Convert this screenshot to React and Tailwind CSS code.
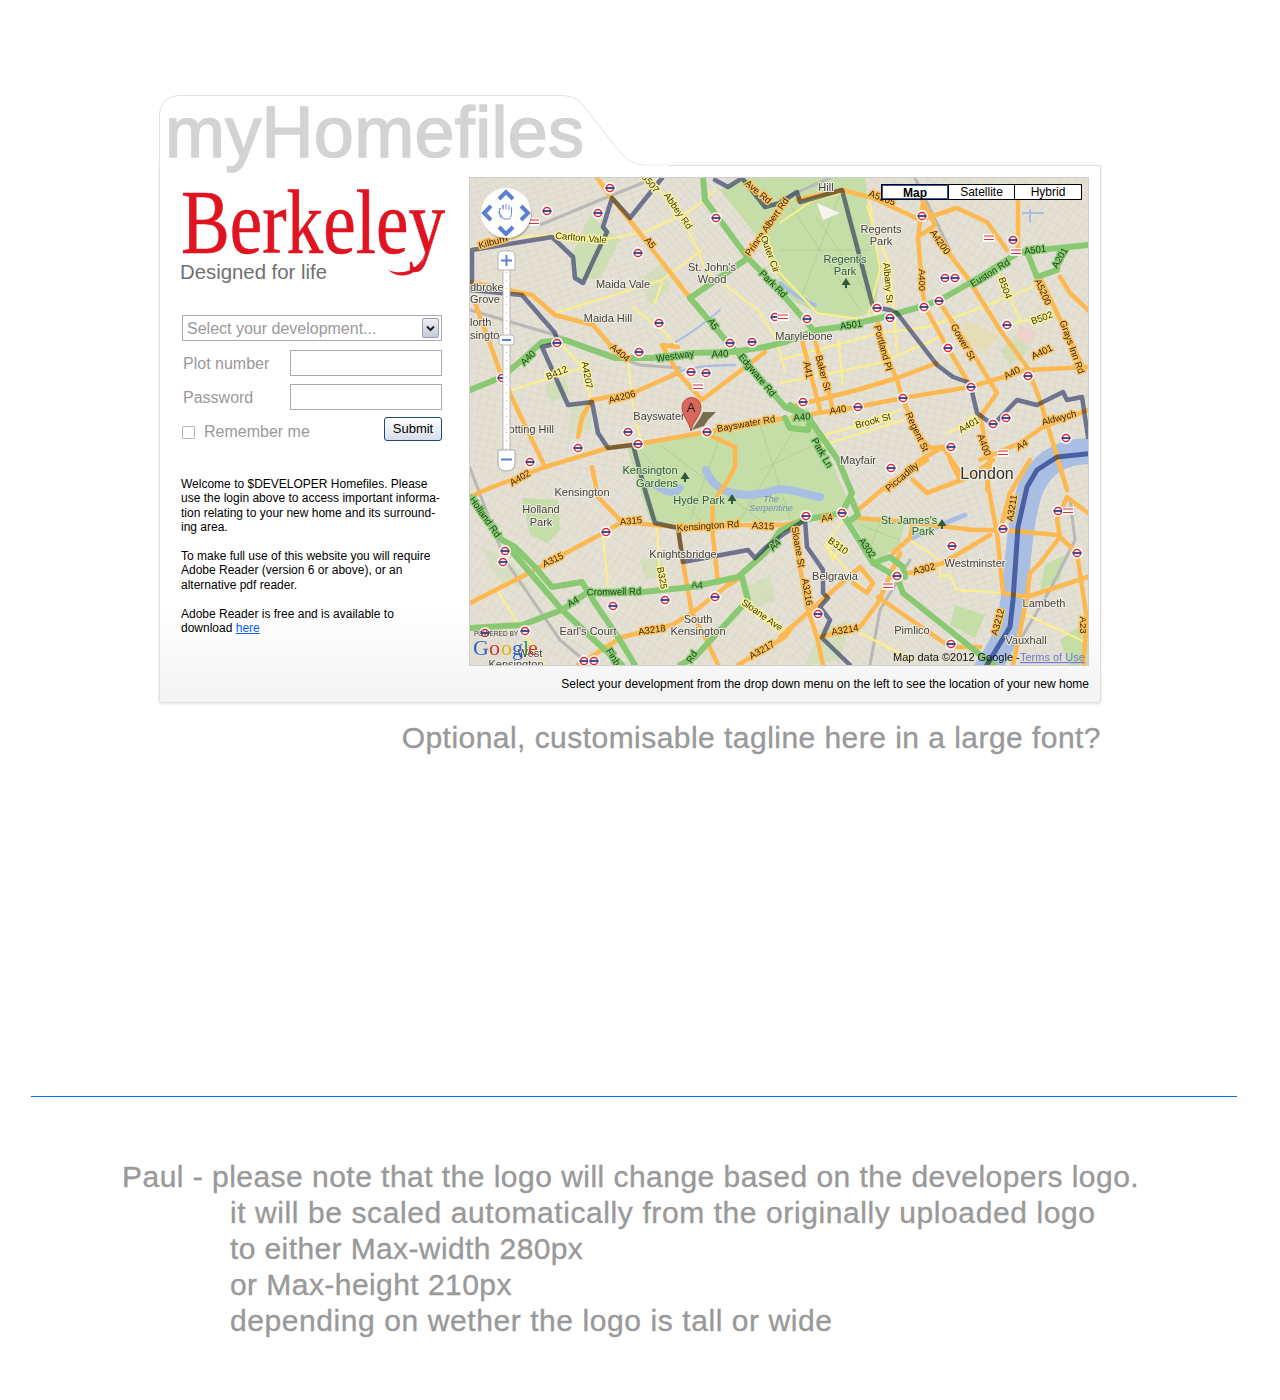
import React from 'react';

const orangeRoads = [
  '597,178 612,198 635,227 655,253 690,298',
  '470,282 508,290 532,295 555,315 593,325 612,347 628,358',
  '592,400 635,392 678,373 702,400 765,352',
  '678,373 662,345 678,347',
  '578,437 582,417 592,400',
  '470,497 485,490 545,467 608,448 638,444 707,432 785,418',
  '790,407 857,390 897,378 937,363',
  '793,417 857,407 903,398 970,387 1027,370 1088,367',
  '475,303 502,377 545,467',
  '705,433 735,447 735,467 728,480 713,503 712,527 718,583',
  '470,603 525,575 605,532 622,522 655,525 678,527 738,525 785,525 803,520',
  '678,527 683,563 692,613',
  '578,665 622,637 672,625 692,613 728,585 742,577',
  '692,613 705,637 718,665',
  '738,665 785,637 790,630',
  '592,467 598,497 622,522',
  '858,510 890,483 927,460',
  '858,518 907,522 973,530 1003,530 1057,535',
  '893,553 910,538 913,523',
  '987,480 997,533 1003,593',
  '893,577 913,572 943,563 990,535',
  '820,637 860,627 878,603 900,553',
  '878,597 943,642 952,647 980,647',
  '793,527 807,607 817,637 823,665',
  '780,637 860,567 873,583 867,593 853,583',
  '1003,593 1027,597 1088,577',
  '1013,665 1027,597 1030,573 1040,563 1060,537 1057,520 1067,497 1088,513',
  '1060,537 1077,553 1087,620 1083,665',
  '1000,530 1010,493 1030,460',
  '918,237 922,287 925,307 947,347 967,380',
  '933,233 967,277 1000,330 1027,367 1040,400 1067,490',
  '940,303 977,360 997,393 980,417',
  '1040,277 1057,313 1083,367',
  '1060,277 1070,293 1088,310',
  '980,460 1020,443 1043,427 1088,410',
  '980,417 990,463 987,490',
  '887,490 920,460 943,447 960,473',
  '913,480 927,493 970,477 993,460',
  '950,460 960,480 927,493',
  '878,323 887,357 897,380 903,400 920,437 930,448 943,447',
  '815,340 830,397 833,410',
  '802,340 820,410',
  '797,200 842,190 873,198 920,220 957,208 987,222 1007,250',
  '1018,200 1018,250',
  '925,190 918,237 935,225 920,195',
];

const greenRoads = [
  '470,390 502,377 522,360 542,342 565,340 592,350 615,358 652,358 692,353 732,352 765,347 785,342 817,330 840,327 880,318 920,307 940,300 970,283 1010,258 1020,252 1088,245',
  '690,298 728,343 738,353 785,407 808,417 838,460 852,493 842,513 873,563 897,577 903,593 983,657 995,665',
  '873,563 890,557 903,567 905,577',
  '470,628 522,625 562,610 588,592 642,592 692,587 738,577 765,553 780,531 803,520 842,513',
  '470,497 502,540 515,547 535,567 552,587 582,582 595,603 618,637 635,665',
  '508,547 562,610 605,650 622,665',
  '742,577 748,600 695,657 680,665',
  '703,177 705,200 748,258 785,297 790,303 813,330',
  '690,298 748,258',
  '1027,252 1037,277 1057,270 1060,250',
  '790,405 810,417 808,430 790,428 785,418',
  '842,513 848,522 858,515 852,500',
];

const yellowRoads = [
  '472,250 515,237 552,235 602,240 645,232 692,210 716,190',
  '645,177 678,210 698,250 705,270 758,310 775,337 785,370',
  '555,313 662,280 702,250',
  '632,307 662,330 678,347',
  '655,303 662,283',
  '628,360 635,420 642,443',
  '512,390 585,367',
  '555,337 582,367 592,403',
  '867,207 890,267 897,350',
  '780,273 817,313 867,320 880,270 870,203',
  '780,223 813,200 842,193',
  '997,270 1020,320',
  '1007,325 1057,313',
  '780,360 880,333 927,327 967,313 1033,287',
  '780,383 880,363 940,337',
  '947,433 960,427 977,413',
  '817,437 853,427 900,410',
  '817,447 903,420',
  '657,528 660,587',
  '603,537 608,587',
  '910,540 940,560 940,577 950,575 957,590 1007,593',
  '860,633 913,660',
  '1023,613 1087,643',
  '497,590 522,630 545,663',
  '827,547 843,543 833,560 827,547',
  '742,603 785,630',
  '843,520 825,545 860,585',
  '838,340 843,385',
  '870,300 890,355',
];

const tubeLines = [
  '662,178 630,218 612,198 603,227 607,232 595,257 583,283 575,278 573,257 552,237 472,250 472,280 470,290 522,295 555,333 558,343 542,347 568,405 592,402 598,433 608,448 633,445 645,490 655,523 678,528 683,562 748,550 755,558 765,548 785,533 805,520 807,547 823,570 823,593 828,598 820,607 830,620 822,638 850,665',
  '715,180 728,187 742,178 765,207 780,203 797,192 800,202 842,190 873,307 890,310 897,313 937,365 953,377 970,383 977,413 993,425 1017,400 1037,405 1063,392 1067,400 1082,397 1088,437',
];

const railLines = [
  '470,310 555,335 640,365 680,368',
  '540,225 600,200 650,180',
  '780,200 830,178',
  '470,468 505,560 560,640 590,665',
  '915,178 950,250',
  '870,665 880,610 910,560',
  '1020,640 1050,590 1075,540 1070,500',
];

const parkPaths = [
  'M640 450L700 520M660 445L760 520M720 437L690 520M760 425L790 518M800 420L740 520M825 440L760 470',
  'M790 205L860 310M840 195L800 300M780 250L870 250M815 215L865 290',
  'M860 525L900 540M880 522L870 550',
];

const tubeStops = [
  [610,188],[547,211],[598,213],[638,253],[716,218],[775,317],[659,323],[730,343],[752,342],[557,343],[639,352],[691,372],[706,373],[502,378],[628,432],[707,432],[578,448],[638,444],[530,462],
  [922,216],[1013,240],[945,278],[955,278],[877,308],[890,318],[924,307],[939,301],[807,319],[1007,325],[948,348],[1028,376],[971,387],[803,402],[858,407],[903,398],[1006,418],[993,424],[1066,438],[951,447],[891,468],
  [606,532],[505,551],[503,562],[613,606],[665,600],[715,597],[485,633],[525,631],[584,661],[594,661],
  [806,516],[842,513],[1003,529],[952,546],[897,576],[818,614],[951,644],[1058,511],[1077,553],
];

const railStops = [[534,222],[698,387],[783,317],[989,238],[1016,252],[1003,453],[1068,511],[888,586]];

const placeLabels = [
  ['Hill',826,191],['Regents',881,233],['Park',881,245],["St. John's",712,271],['Wood',712,283],
  ['Maida Vale',623,288],['Maida Hill',608,322],['Marylebone',804,340],['Bayswater',659,420],
  ['Kensington',582,496],['Holland',541,513],['Park',541,526],['Mayfair',858,464],['Knightsbridge',683,558],
  ['Belgravia',835,580],['Westminster',975,567],['Lambeth',1044,607],['South',698,623],['Kensington',698,635],
  ["Earl's Court",588,635],['Pimlico',912,634],['Vauxhall',1026,644],['West',530,657],['Kensington',516,668],
  ['lotting Hill',530,433],
];

const leftLabels = [['dbroke',470,291],['Grove',470,303],['lorth',470,326],['singto',470,339]];

const parkLabels = [
  ["Regent's",845,263],['Park',845,275],['Kensington',650,474],['Gardens',657,487],
  ['Hyde Park',699,504],["St. James's",909,524],['Park',923,535],
];

const trees = [[846,284],[685,478],[732,500],[942,525]];

// [text, x, y, rotation, kind]
const roadLabels = [
  ['B507',650,186,50,'y'],['A5',650,246,50,'o'],['Abbey Rd',678,214,55,'y'],['Ave Rd',758,195,40,'o'],
  ['Prince Albert Rd',767,230,-55,'o'],['Outer Cir',770,257,70,'y'],['Park Rd',773,287,45,'g'],
  ['Carlton Vale',581,241,5,'y'],['Kilburn',493,245,-15,'o'],['A5',713,327,55,'g'],['A404',620,356,40,'o'],
  ['Westway',675,359,-8,'g'],['A40',720,357,-3,'g'],['Edgware Rd',757,378,50,'g'],['A40',528,361,-45,'g'],
  ['B412',557,376,-22,'y'],['A4207',587,378,80,'y'],['A4206',622,400,-15,'o'],['Bayswater Rd',746,427,-10,'o'],
  ['A402',520,481,-30,'o'],['A5205',882,201,20,'o'],['A4200',940,245,55,'o'],['A400',922,283,90,'o'],
  ['Euston Rd',990,276,-32,'g'],['A501',1035,253,-8,'g'],['A201',1060,261,-60,'g'],['B504',1005,291,70,'y'],
  ['A5200',1043,295,65,'o'],['B502',1042,321,-20,'y'],['Grays Inn Rd',1072,350,70,'o'],['Albany St',888,286,85,'y'],
  ['A501',851,328,-8,'g'],['Portland Pl',883,351,75,'o'],['Gower St',963,345,60,'o'],['A41',808,373,80,'o'],
  ['Baker St',823,376,75,'o'],['A401',1042,355,-25,'o'],['A40',1012,376,-28,'o'],['A40',838,413,-8,'o'],
  ['A40',802,420,-5,'g'],['Brook St',873,424,-15,'y'],['Regent St',917,435,65,'o'],['A401',969,428,-30,'y'],
  ['Aldwych',1059,421,-15,'o'],['A4',1022,448,-30,'o'],['A400',984,448,70,'o'],['Park Ln',822,456,60,'g'],
  ['Piccadilly',902,480,-40,'o'],['Holland Rd',485,520,55,'g'],['A315',631,524,-5,'o'],['A315',553,563,-25,'o'],
  ['Kensington Rd',708,529,-4,'o'],['A315',763,529,3,'o'],['A4',775,548,-45,'g'],['B325',662,581,80,'y'],
  ['A4',697,588,0,'g'],['Cromwell Rd',614,595,-1,'g'],['A4',573,605,-30,'g'],['A3218',652,633,-8,'o'],
  ['Sloane Ave',762,618,35,'y'],['A3217',762,653,-30,'o'],['Finb',613,660,60,'g'],['Rd',692,660,-60,'g'],
  ['A4',827,521,-10,'o'],['Sloane St',798,550,80,'o'],['B310',838,549,35,'y'],['A302',867,551,55,'g'],
  ['A3216',807,595,80,'o'],['A3214',845,633,-10,'o'],['A302',924,572,-15,'o'],['A3211',1012,511,-80,'o'],
  ['A3212',998,625,-75,'o'],['A23',1083,628,90,'o'],
];

const haloColors = { o: '#fdc05e', g: '#8ccb76', y: '#fbf29a' };
const textColors = { o: '#332808', g: '#173d14', y: '#38340f' };

const Roads = ({ lines, color, width, opacity = 1 }) => (
  <g fill="none" stroke={color} strokeWidth={width} strokeOpacity={opacity} strokeLinejoin="round" strokeLinecap="round">
    {lines.map((pts, i) => <polyline key={i} points={pts} />)}
  </g>
);

const StreetPattern = ({ id, w, h, angle }) => (
  <pattern id={id} width={w} height={h} patternUnits="userSpaceOnUse" patternTransform={`rotate(${angle})`}>
    <path d={`M0 0H${w}M0 0V${h}`} stroke="#cdc7ba" strokeWidth="0.6" fill="none" />
  </pattern>
);

const CityMap = () => (
  <svg width="618" height="487" viewBox="470 178 618 487" className="block blur-[0.4px]" fontFamily="Liberation Sans, Arial, sans-serif">
    <defs>
      <StreetPattern id="streets1" w={9} h={6} angle={-18} />
      <StreetPattern id="streets2" w={7} h={10} angle={32} />
      <StreetPattern id="streets3" w={8} h={7} angle={12} />
      <StreetPattern id="streets4" w={6} h={9} angle={-42} />
    </defs>
    <rect x="470" y="178" width="618" height="487" fill="#e5e0d4" />
    <rect x="470" y="178" width="180" height="180" fill="url(#streets1)" />
    <rect x="650" y="178" width="150" height="180" fill="url(#streets4)" />
    <rect x="470" y="358" width="330" height="120" fill="url(#streets3)" />
    <rect x="470" y="478" width="320" height="187" fill="url(#streets2)" />
    <rect x="800" y="178" width="288" height="150" fill="url(#streets2)" />
    <rect x="800" y="328" width="288" height="140" fill="url(#streets3)" />
    <rect x="790" y="468" width="150" height="197" fill="url(#streets4)" />
    <rect x="940" y="468" width="148" height="197" fill="url(#streets1)" />

    {/* parks */}
    <g fill="#c5dea8">
      <path d="M627 447L707 432L790 416L808 408L850 505L842 515L800 520L740 522L660 525L650 520L640 490Z" />
      <path d="M748 178H866L867 207L880 270L875 312L850 318L817 313L792 300L778 275L760 240L720 190Z" />
      <path d="M522 498L558 500L560 530L548 543L530 535Z" />
      <path d="M850 518L905 522L900 545L878 560L860 535Z" />
      <path d="M590 215L620 240L600 278L578 280L572 255Z" opacity="0.7" />
      <path d="M955 605L985 615L975 638L950 625Z" />
      <path d="M1045 565L1065 555L1060 580L1040 590Z" />
      <path d="M1060 640L1088 620V665H1070Z" />
      <path d="M1000 350L1020 330L1030 350L1010 365Z" opacity="0.6" />
      <path d="M545 385L565 378L570 395L550 402Z" opacity="0.6" />
      <path d="M570 405L590 402L592 430L568 435Z" opacity="0.4" />
      <path d="M480 545L510 560L530 590L498 580Z" opacity="0.4" />
      <path d="M640 560L660 555L665 575L645 580Z" opacity="0.5" />
      <path d="M740 590L770 575L775 600L750 610Z" opacity="0.5" />
      <path d="M640 280L665 260L670 290L650 305Z" opacity="0.5" />
      <path d="M820 630L850 620L840 660L805 665Z" opacity="0.5" />
    </g>
    <g fill="none" stroke="#a6c68c" strokeWidth="0.6">
      {parkPaths.map((d, i) => <path key={i} d={d} />)}
    </g>
    <path d="M817 203L840 213L823 220Z" fill="#f5f3ec" />
    <path d="M965 320L1000 335L985 352L960 340Z" fill="#e6dcb8" />
    <path d="M1020 325L1038 332L1028 345L1015 338Z" fill="#ecd2c8" />

    {/* water */}
    <g fill="none" stroke="#a8bfe3" strokeLinecap="round" strokeLinejoin="round">
      <path d="M1095 451C1060 450 1040 465 1030 490C1018 525 1018 575 1012 610C1008 635 1000 650 985 672" strokeWidth="26" />
      <path d="M706 470C715 495 745 500 775 490C790 487 805 495 820 497" strokeWidth="8" />
      <path d="M655 485Q672 498 680 488" strokeWidth="7" />
      <path d="M780 283Q800 300 815 305" strokeWidth="4" />
      <path d="M908 540Q940 525 965 515" strokeWidth="5" />
      <path d="M670 375Q690 365 735 365" strokeWidth="2.5" />
      <path d="M670 345Q690 335 720 310" strokeWidth="2" />
      <path d="M1023 213H1043M1030 210V222" strokeWidth="2" />
    </g>

    <Roads lines={railLines} color="#b8b8b6" width="3" />
    <Roads lines={yellowRoads} color="#fbf086" width="2" />
    <Roads lines={orangeRoads} color="#fdb84f" width="4.5" />
    <Roads lines={greenRoads} color="#88c972" width="6" />
    <g className="mix-blend-multiply">
      <Roads lines={tubeLines} color="#7c84ad" width="4.5" />
      <Roads
        lines={['1095,453 1057,457 1037,470 1027,487 1018,527 1013,600 1010,627 985,668']}
        color="#6f80b8"
        width="5"
      />
    </g>

    {tubeStops.map(([x, y], i) => (
      <g key={i}>
        <circle cx={x} cy={y} r="6" fill="#fff" opacity="0.85" />
        <circle cx={x} cy={y} r="3.6" fill="#fff" stroke="#dc2a3a" strokeWidth="1.5" />
        <rect x={x - 4.5} y={y - 0.9} width="9" height="1.8" fill="#2f3e92" />
      </g>
    ))}
    {railStops.map(([x, y], i) => (
      <g key={i} fill="none" stroke="#e0303c" strokeWidth="1">
        <rect x={x - 6} y={y - 4} width="12" height="8" fill="#fff" stroke="none" opacity="0.8" />
        <path d={`M${x - 5} ${y - 2}H${x + 5}M${x - 5} ${y + 1.5}H${x + 5}`} />
      </g>
    ))}

    {/* labels */}
    <g fontSize="9.5" textAnchor="middle" stroke="none">
      {roadLabels.map(([label, x, y, rot, kind], i) => (
        <text
          key={i}
          x={x}
          y={y}
          transform={`rotate(${rot} ${x} ${y - 3})`}
          fill={textColors[kind]}
          stroke={haloColors[kind]}
          strokeWidth="3"
          paintOrder="stroke"
          strokeLinejoin="round"
        >
          {label}
        </text>
      ))}
    </g>
    <g fontSize="11" textAnchor="middle" fill="#45423c" stroke="#f0ede5" strokeWidth="2" paintOrder="stroke" strokeLinejoin="round">
      {placeLabels.map(([label, x, y], i) => <text key={i} x={x} y={y}>{label}</text>)}
    </g>
    <g fontSize="11" fill="#45423c" stroke="#f0ede5" strokeWidth="2" paintOrder="stroke" strokeLinejoin="round">
      {leftLabels.map(([label, x, y], i) => <text key={i} x={x} y={y}>{label}</text>)}
    </g>
    <g fontSize="11" textAnchor="middle" fill="#2f5a3e" stroke="#d4e6bd" strokeWidth="2" paintOrder="stroke" strokeLinejoin="round">
      {parkLabels.map(([label, x, y], i) => <text key={i} x={x} y={y}>{label}</text>)}
    </g>
    {trees.map(([x, y], i) => (
      <path key={i} d={`M${x} ${y - 6}L${x + 4.5} ${y + 1}H${x + 1}V${y + 4}H${x - 1}V${y + 1}H${x - 4.5}Z`} fill="#2f5a3e" />
    ))}
    <g fontSize="9" fontStyle="italic" textAnchor="middle" fill="#6f8db5">
      <text x="771" y="502">The</text>
      <text x="771" y="511">Serpentine</text>
    </g>
    <text x="987" y="479" fontSize="16" textAnchor="middle" fill="#33322e" stroke="#f0ede5" strokeWidth="2.5" paintOrder="stroke">London</text>

    {/* marker */}
    <path d="M692 430L700 418L703 412L716 412L708 420L704 426Z" fill="#5e5030" opacity="0.8" />
    <path d="M691 431C689 421 682 416 682 407A9.5 9.5 0 0 1 701 407C701 416 693 421 691 431Z" fill="#d9685a" stroke="#a8392e" strokeWidth="0.8" />
    <text x="691" y="412" fontSize="13" textAnchor="middle" fill="#222">A</text>

    {/* pan control */}
    <circle cx="507" cy="215" r="25" fill="#000" opacity="0.2" />
    <circle cx="506" cy="213" r="25" fill="#fff" />
    <g fill="none" stroke="#5b80cf" strokeWidth="4" strokeLinejoin="miter">
      <path d="M499 199L506 192L513 199" />
      <path d="M499 227L506 234L513 227" />
      <path d="M491 206L484 213L491 220" />
      <path d="M521 206L528 213L521 220" />
    </g>
    <path
      d="M501 218C499 214 499 212 500 208V209M503 208V205.5M503 209V205M506 209V204.5M509 209.5V205.5M511.5 211V207.5M511.5 211C512 215 511 217 509.5 219H503.5L500 213.5L498 212"
      fill="none"
      stroke="#6a8ad0"
      strokeWidth="1"
      strokeLinecap="round"
    />

    {/* zoom slider */}
    <rect x="503" y="268" width="7" height="184" fill="#fff" stroke="#aaa" strokeWidth="0.8" />
    <path d="M506.5 272V450" stroke="#bbb" strokeWidth="1" strokeDasharray="1 7" />
    <path d="M498 256Q498 251 503 251H510Q515 251 515 256V270H498Z" fill="#fff" stroke="#b5b5b5" />
    <path d="M501 260.5H512M506.5 255V266" stroke="#5b80cf" strokeWidth="2" />
    <rect x="499" y="335" width="15" height="10" rx="3" fill="#fff" stroke="#b5b5b5" />
    <path d="M502 340H511" stroke="#5b80cf" strokeWidth="2" />
    <path d="M498 450H515V463Q515 471 506.5 471Q498 471 498 463Z" fill="#fff" stroke="#a8a8a8" />
    <path d="M501 459.5H512" stroke="#5b80cf" strokeWidth="2" />

    {/* google logo */}
    <text x="474" y="636" fontSize="6.5" fill="#444">POWERED BY</text>
    <g fontSize="22" fontFamily="Liberation Serif, serif">
      <text x="473" y="655" fill="#2f62c9">G</text>
      <text x="489" y="655" fill="#d6352a">o</text>
      <text x="501" y="655" fill="#e6b21c">o</text>
      <text x="512" y="655" fill="#2f62c9">g</text>
      <text x="523" y="655" fill="#3a9b3f">l</text>
      <text x="528" y="655" fill="#d6352a">e</text>
    </g>

    {/* attribution */}
    <text x="893" y="661" fontSize="11" fill="#111">Map data ©2012 Google -</text>
    <text x="1020" y="661" fontSize="11" fill="#6f78d8" textDecoration="underline">Terms of Use</text>
  </svg>
);

const BerkeleyLogo = () => (
  <svg width="330" height="105" viewBox="0 0 330 105" className="block -mr-[60px]" aria-label="Berkeley">
    <text
      x="0"
      y="69"
      fontFamily="Liberation Serif, serif"
      fontSize="90"
      fill="#e01420"
      stroke="#e01420"
      strokeWidth="0.6"
      textLength="264"
      lengthAdjust="spacingAndGlyphs"
    >
      Berkeley
    </text>
    <path d="M207 86C218 95 232 93 240 80L250 56L243 72C236 86 222 92 207 86Z" fill="#e01420" />
    <text
      x="-1"
      y="95"
      fontFamily="Liberation Sans, Arial, sans-serif"
      fontSize="21"
      fill="#707072"
      textLength="147"
      lengthAdjust="spacingAndGlyphs"
    >
      Designed for life
    </text>
  </svg>
);

const FormRow = ({ label }) => (
  <div className="flex items-center justify-between h-[26px] pl-px">
    <span className="pt-[2px] text-[16px] text-[#999]">{label}</span>
    <div className="w-[152px] h-[26px] border border-[#a9abb0] bg-white" />
  </div>
);

export default function App() {
  return (
    <div className="w-[1280px] h-[1400px] bg-white pt-[95px] font-['Liberation_Sans',Arial,sans-serif]">
      <div className="w-[942px] ml-[159px]">
        {/* folder tab */}
        <div className="relative z-10 h-[71px] -mb-px">
          <svg width="510" height="71" viewBox="0 0 510 71" className="absolute left-0 top-0">
            <path
              d="M0.5 71V22Q0.5 0.5 22 0.5H401C415 0.5 422 6 428 15L455 50C465 62 472 70.5 490 70.5H510V71Z"
              fill="#fff"
              stroke="#e2e2e2"
            />
            <path d="M0 71H510" stroke="#fff" strokeWidth="1.5" />
          </svg>
          <h1 className="absolute left-[6px] top-[-4px] text-[72px] leading-[82px] font-normal tracking-[0.3px] text-[#d3d3d3] [-webkit-text-stroke:1.6px_#d3d3d3]">
            myHomefiles
          </h1>
        </div>

        {/* card */}
        <div className="h-[538px] border border-[#e0e0e0] rounded-b-[2px] shadow-[0_1px_3px_rgba(0,0,0,0.12)] bg-[linear-gradient(to_bottom,#ffffff_0%,#ffffff_82%,#f3f3f3_100%)] flex pt-[11px]">
          <div className="w-[283px] pl-[21px] shrink-0">
            <div className="pt-[7px]">
              <BerkeleyLogo />
            </div>
            <div className="mt-[26px] ml-px w-[260px] flex flex-col gap-[8px]">
              <div className="h-[26px] mb-px border border-[#a9abb0] bg-white flex items-center justify-between pl-[4px] pr-[2px]">
                <span className="pt-[2px] text-[16px] text-[#999]">Select your development...</span>
                <div className="w-[17px] h-[20px] rounded-[2px] border border-[#9a9eb0] bg-[linear-gradient(to_bottom,#eef0f6,#c5c9d8)] flex items-center justify-center">
                  <svg width="9" height="7" viewBox="0 0 9 7">
                    <path d="M1 1.5L4.5 5L8 1.5" fill="none" stroke="#222" strokeWidth="2" />
                  </svg>
                </div>
              </div>
              <FormRow label="Plot number" />
              <FormRow label="Password" />
              <div className="flex items-start justify-between h-[24px] -mt-[1px]">
                <div className="flex items-center gap-[9px] pt-[3px]">
                  <div className="w-[13px] h-[13px] border border-[#b5b7bb] rounded-[1px] bg-white" />
                  <span className="text-[16px] text-[#999]">Remember me</span>
                </div>
                <button className="w-[58px] h-[24px] rounded-[3px] border border-[#1d4a77] bg-[linear-gradient(to_bottom,#ffffff,#d9dcea)] text-[13px] text-black">
                  Submit
                </button>
              </div>
            </div>
            <div className="mt-[36px] text-[12px] leading-[14.4px] text-black">
              <p>
                Welcome to $DEVELOPER Homefiles. Please<br />
                use the login above to access important informa-<br />
                tion relating to your new home and its surround-<br />
                ing area.
              </p>
              <p className="mt-[14.4px]">
                To make full use of this website you will require<br />
                Adobe Reader (version 6 or above), or an<br />
                alternative pdf reader.
              </p>
              <p className="mt-[14.4px]">
                Adobe Reader is free and is available to<br />
                download <a className="text-[#0b5fff] underline">here</a>
              </p>
            </div>
          </div>

          <div className="flex-1 pl-[26px]">
            <div className="relative w-[620px] h-[489px] border border-[#cfcfcf]">
              <CityMap />
              <div className="absolute right-[6px] top-[6px] w-[201px] h-[16px] flex border border-black bg-white text-[12px] leading-[14px] text-black text-center">
                <div className="w-[66px] font-bold border border-[#2a5db0]">Map</div>
                <div className="flex-1 border-l border-black">Satellite</div>
                <div className="w-[67px] border-l border-black">Hybrid</div>
              </div>
            </div>
            <p className="mt-[11px] w-[620px] text-right text-[12px] leading-[14px] text-black">
              Select your development from the drop down menu on the left to see the location of your new home
            </p>
          </div>
        </div>

        <p className="mt-[17px] text-right text-[30px] leading-[36px] tracking-[0.46px] text-[#999] [-webkit-text-stroke:0.35px_#999]">
          Optional, customisable tagline here in a large font?
        </p>
      </div>

      <div className="mt-[340px] ml-[31px] w-[1206px] h-px bg-[#0a6cf5]" />

      <div className="mt-[62px] text-[30px] leading-[36px] text-[#999] [-webkit-text-stroke:0.35px_#999]">
        <p className="ml-[122px] tracking-[0.47px]">Paul - please note that the logo will change based on the developers logo.</p>
        <div className="ml-[230px]">
          <p className="tracking-[0.59px]">it will be scaled automatically from the originally uploaded logo</p>
          <p className="tracking-[0.39px]">to either Max-width 280px</p>
          <p className="tracking-[0.44px]">or Max-height 210px</p>
          <p className="tracking-[0.58px]">depending on wether the logo is tall or wide</p>
        </div>
      </div>
    </div>
  );
}
